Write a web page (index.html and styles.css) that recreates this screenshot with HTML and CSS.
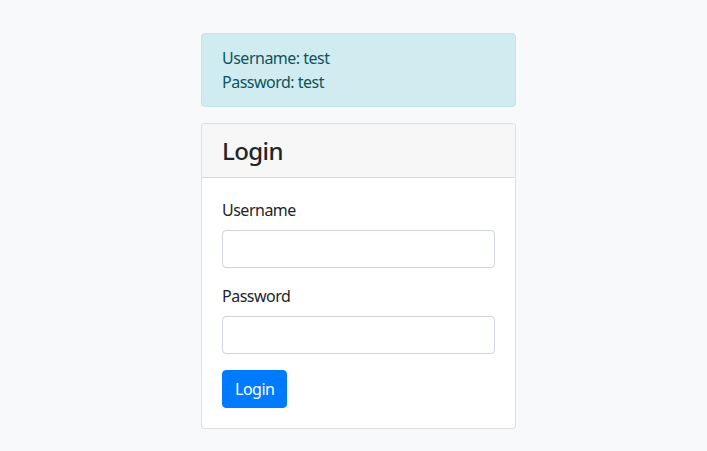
FILE: index.html
```html
<!DOCTYPE html>
<html lang="en">
<head>
    <meta charset="UTF-8">
    <meta name="viewport" content="width=device-width, initial-scale=1.0">
    <title>Login</title>
    <link rel="stylesheet" href="styles.css">
</head>
<body>
    <div class="page">
        <!-- hint -->
        <div class="alert">
            Username: test<br>
            Password: test
        </div>

        <!-- login card -->
        <div class="card">
            <div class="card-header">
                <h3>Login</h3>
            </div>
            <form class="card-body">
                <div class="form-group">
                    <label for="username">Username</label>
                    <input type="text" id="username" class="form-control">
                </div>
                <div class="form-group">
                    <label for="password">Password</label>
                    <input type="password" id="password" class="form-control">
                </div>
                <button type="button" class="btn">Login</button>
            </form>
        </div>
    </div>
</body>
</html>
```

FILE: styles.css
```css
body {
    margin: 0;
    background: #f8f9fa;
    color: #212529;
    font-family: "Noto Sans", "Open Sans", sans-serif;
    font-size: 16px;
    line-height: 24px;
    letter-spacing: -0.5px;
}

.page {
    width: 315px;
    margin: 33px 0 0 201px;
}

/* alert */
.alert {
    padding: 12px 20px;
    background: #d1ecf1;
    border: 1px solid #bee5eb;
    border-radius: 4px;
    color: #0c5460;
    margin-bottom: 16px;
}

/* card */
.card {
    background: #fff;
    border: 1px solid rgba(0, 0, 0, .125);
    border-radius: 4px;
}

.card-header {
    padding: 12px 20px;
    background: #f7f7f7;
    border-bottom: 1px solid rgba(0, 0, 0, .125);
    border-radius: 3px 3px 0 0;
}

.card-header h3 {
    margin: 0;
    font-size: 24px;
    font-weight: 500;
    line-height: 29px;
    letter-spacing: -0.6px;
}

.card-body {
    display: block;
    padding: 20px;
}

.form-group {
    margin-bottom: 16px;
}

.form-group label {
    display: block;
    margin-bottom: 8px;
}

.form-control {
    display: block;
    box-sizing: border-box;
    width: 100%;
    height: 38px;
    padding: 6px 12px;
    border: 1px solid #ced4da;
    border-radius: 4px;
    font: inherit;
    background: #fff;
}

.btn {
    display: block;
    height: 38px;
    padding: 6px 12px;
    border: 1px solid #007bff;
    border-radius: 4px;
    background: #007bff;
    color: #fff;
    font: inherit;
    letter-spacing: -0.5px;
}
```
